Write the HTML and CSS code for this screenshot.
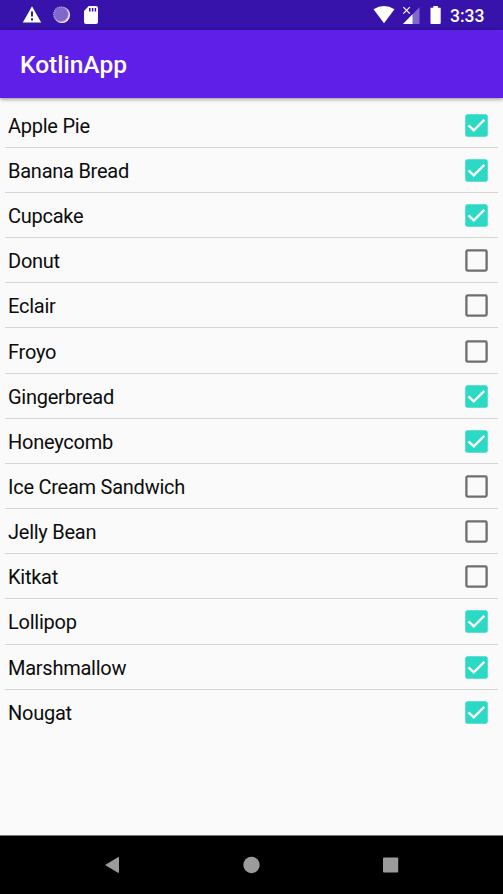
FILE: index.html
```html
<!DOCTYPE html>
<html lang="en">
<head>
<meta charset="utf-8">
<title>KotlinApp</title>
<link rel="stylesheet" href="styles.css">
</head>
<body>
<svg width="0" height="0" class="defs">
  <symbol id="on" viewBox="0 0 24 24"><rect x="1.2" y="1.2" width="21.6" height="21.6" rx="2.4" fill="#2bd9c4"/><path d="M4.3 11.8 9.4 16.7 19.5 6.6" fill="none" stroke="#fff" stroke-width="2.3"/></symbol>
  <symbol id="off" viewBox="0 0 24 24"><rect x="2.3" y="2.3" width="19.4" height="19.4" rx="1.2" fill="none" stroke="#6e6e6e" stroke-width="2.2"/></symbol>
</svg>
<div class="screen">
  <div class="status">
    <svg class="status-left" width="80" height="30" viewBox="0 0 80 30">
      <path d="M10 6.3 19.2 22.6H.8Z" fill="#fff"/>
      <path d="M10 11.5v5M10 18.2v2.4" stroke="#3713ab" stroke-width="2"/>
      <circle cx="40" cy="15" r="8" fill="#fff"/>
      <circle cx="39" cy="14.3" r="7.5" fill="#8067cc"/>
      <circle cx="39" cy="14.3" r="7.3" fill="none" stroke="#ab99df" stroke-width="1.4" stroke-dasharray="1 1"/>
      <path d="M66.8 6H74a2 2 0 0 1 2 2v14a2 2 0 0 1-2 2H64a2 2 0 0 1-2-2V11Z" fill="#fff"/>
      <path d="M67.8 8v3.4M70.6 8v3.4M73.4 8v3.4" stroke="#3713ab" stroke-width="1.5"/>
    </svg>
    <svg class="status-right" width="70" height="30" viewBox="0 0 70 30">
      <path d="M.5 9.3Q11 2.7 21.5 9.3L11 23.2Z" fill="#fff"/>
      <path d="M46.5 7.2V24H30Z" fill="#8067cc"/>
      <path d="M39.5 14.2V24H30Z" fill="#fff"/>
      <path d="M30.3 7.2l6.5 6.5M36.8 7.2l-6.5 6.5" stroke="#fff" stroke-width="1.2"/>
      <path d="M60.3 6h4.6v1.8h2.8V23a1 1 0 0 1-1 1h-8.2a1 1 0 0 1-1-1V7.8h2.8Z" fill="#fff"/>
    </svg>
    <span class="clock">3:33</span>
  </div>
  <header class="appbar"><h1>KotlinApp</h1></header>
  <ul class="list">
    <li><span>Apple Pie</span><svg><use href="#on"/></svg></li>
    <li><span>Banana Bread</span><svg><use href="#on"/></svg></li>
    <li><span>Cupcake</span><svg><use href="#on"/></svg></li>
    <li><span>Donut</span><svg><use href="#off"/></svg></li>
    <li><span>Eclair</span><svg><use href="#off"/></svg></li>
    <li><span>Froyo</span><svg><use href="#off"/></svg></li>
    <li><span>Gingerbread</span><svg><use href="#on"/></svg></li>
    <li><span>Honeycomb</span><svg><use href="#on"/></svg></li>
    <li><span>Ice Cream Sandwich</span><svg><use href="#off"/></svg></li>
    <li><span>Jelly Bean</span><svg><use href="#off"/></svg></li>
    <li><span>Kitkat</span><svg><use href="#off"/></svg></li>
    <li><span>Lollipop</span><svg><use href="#on"/></svg></li>
    <li><span>Marshmallow</span><svg><use href="#on"/></svg></li>
    <li><span>Nougat</span><svg><use href="#on"/></svg></li>
  </ul>
  <nav class="navbar">
    <svg width="24" height="24" viewBox="0 0 24 24"><path d="M19 4.4v14.8q0 1-1 .5L5.8 12.6q-1-.6 0-1.2L18 4.2q1-.5 1 .5Z" fill="#9b9b9b"/></svg>
    <svg width="24" height="24" viewBox="0 0 24 24"><circle cx="12.5" cy="12" r="8.2" fill="#9b9b9b"/></svg>
    <svg width="24" height="24" viewBox="0 0 24 24"><rect x="5" y="4.4" width="15.2" height="15.2" rx="1" fill="#9b9b9b"/></svg>
  </nav>
</div>
</body>
</html>
```
FILE: styles.css
```css
* { box-sizing: border-box; }
body { margin: 0; font-family: Roboto, "Liberation Sans", sans-serif; background: #fafafa; }
.defs { display: none; }
.screen { display: flex; flex-direction: column; height: 894px; overflow: hidden; }
.status { display: flex; align-items: center; height: 30px; padding: 0 18px 0 22px; background: #3713ab; flex: none; }
.status svg { display: block; }
.status-right { margin-left: auto; }
.clock { margin-left: 7px; color: #fff; font-size: 17.5px; font-weight: 500; line-height: 30px; width: 35px; padding-top: 1px; white-space: nowrap; }
.appbar { display: flex; align-items: center; height: 68px; padding: 2px 20px 0; background: #601fe8; flex: none; box-shadow: 0 1px 4px rgba(0, 0, 0, .45); }
.appbar h1 { margin: 0; color: #fff; font-size: 24.5px; font-weight: 500; line-height: 30px; }
.list { list-style: none; margin: 0; padding: 4.7px 5px 0; flex: 1; }
.list li { display: flex; align-items: center; justify-content: space-between; height: 45.17px; padding: 0 9px 0 3px; border-bottom: 1px solid #d6d6d6; }
.list li:last-child { border-bottom: 0; }
.list span { color: #0c0c0c; font-size: 20px; letter-spacing: -0.25px; line-height: 28px; padding-top: 2px; }
.list svg { width: 25px; height: 25px; margin-top: 1px; }
.list li:last-child svg { margin-top: 0; }
.navbar { display: flex; justify-content: space-between; align-items: center; height: 59px; padding: 0 101px 0 100px; background: #000; border-top: 1px solid #777; flex: none; }
```
